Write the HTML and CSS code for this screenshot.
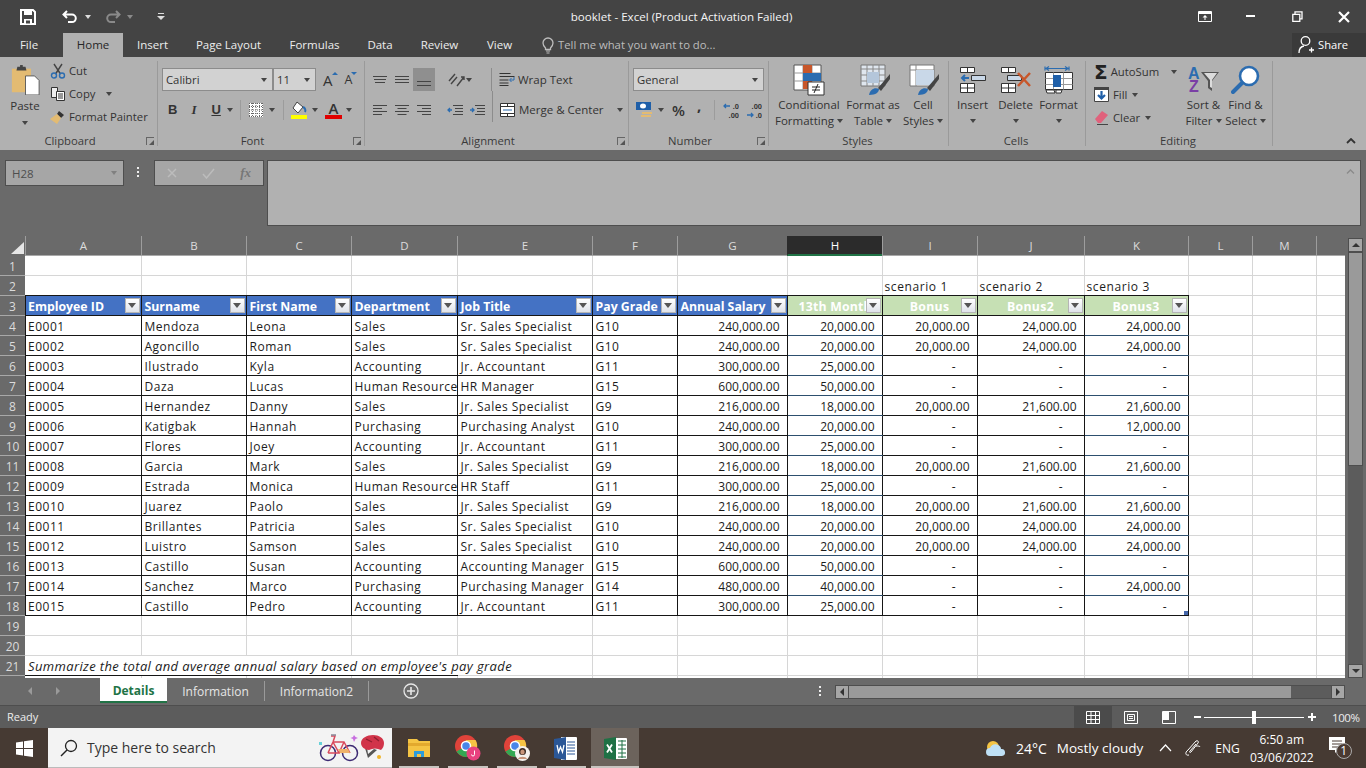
FILE: index.html
```html
<!DOCTYPE html>
<html lang="en">
<head>
<meta charset="utf-8">
<title>booklet - Excel</title>
<link rel="stylesheet" href="styles.css">
</head>
<body>
<div class="app">
<header class="titlebar">
  <div class="qat">
    <svg class="q-save" width="18" height="18" viewBox="0 0 18 18"><path d="M2 2h12l2 2v12H2z" fill="none" stroke="#fff" stroke-width="2"/><path d="M5 2h8v5H5zM5 11h8v5H5z" fill="#fff"/><path d="M7 12.500h4v3H7z" fill="#444"/></svg>
    <svg class="q-undo" width="16" height="14" viewBox="0 0 16 14"><path d="M5 1 1.500 4.500 5 8M2 4.500h8a3.800 3.800 0 0 1 0 7.600H6" fill="none" stroke="#fff" stroke-width="2"/></svg>
    <span class="caret lt q-c1"></span>
    <svg class="q-redo" width="16" height="14" viewBox="0 0 16 14"><path d="M11 1l3.500 3.500L11 8M14 4.500H6a3.800 3.800 0 0 0 0 7.600h4" fill="none" stroke="#8a8a8a" stroke-width="2"/></svg>
    <span class="caret dim q-c2"></span>
    <svg class="q-more" width="8" height="9" viewBox="0 0 8 9"><path d="M1 1h6v1H1z" fill="#ddd"/><path d="M0 4h8L4 8z" fill="#ddd"/></svg>
  </div>
  <div class="doc-title">booklet - Excel (Product Activation Failed)</div>
  <div class="win">
    <svg class="w-a" width="14" height="11" viewBox="0 0 14 11"><path d="M.5.500h13v10H.5z" fill="none" stroke="#fff"/><path d="M1 1h12v2H1z" fill="#fff"/><path d="M7 4 4.500 6.500h2V9h1V6.500h2z" fill="#fff"/></svg>
    <svg class="w-b" width="10" height="3" viewBox="0 0 10 3"><path d="M0 0h9v2H0z" fill="#fff"/></svg>
    <svg class="w-c" width="11" height="11" viewBox="0 0 11 11"><path d="M.8 3.300h7v7h-7zM3 3V.8h7v7H8" fill="none" stroke="#fff" stroke-width="1.300"/></svg>
    <svg class="w-d" width="12" height="12" viewBox="0 0 12 12"><path d="M1 1l10 10M11 1 1 11" stroke="#fff" stroke-width="2.200"/></svg>
  </div>
</header>
<nav class="tabs">
  <span class="tab t-file">File</span>
  <span class="tab active t-home">Home</span>
  <span class="tab t-ins">Insert</span>
  <span class="tab t-pl">Page Layout</span>
  <span class="tab t-for">Formulas</span>
  <span class="tab t-data">Data</span>
  <span class="tab t-rev">Review</span>
  <span class="tab t-view">View</span>
  <svg class="bulb" width="12" height="17" viewBox="0 0 12 17"><path d="M3.500 11C2 9.500 1 8.500 1 6a5 5 0 0 1 10 0c0 2.500-1 3.500-2.500 5v1.500h-5z" fill="none" stroke="#bdbdbd" stroke-width="1.300"/><path d="M4 14h4M4.500 16h3" stroke="#bdbdbd" stroke-width="1.200"/></svg>
  <span class="tell">Tell me what you want to do...</span>
  <span class="share"><svg width="16" height="19" viewBox="0 0 16 19"><circle cx="7.500" cy="6" r="4.300" fill="none" stroke="#fff" stroke-width="1.300"/><path d="M1 18c0-4 2-6.500 5-7M11 15h5M13.500 12.500v5" fill="none" stroke="#fff" stroke-width="1.300"/></svg>Share</span>
</nav>
<section class="ribbon">
  <div class="group g-clip">
    <div class="g-body">
      <div class="big paste">
        <svg width="29" height="30" viewBox="0 0 32 33"><path d="M1 4h21v26H1z" fill="#e3bb72"/><path d="M7 2h9l1 4H6z" fill="#444"/><path d="M10 0h3v3h-3z" fill="#444"/><path d="M16 12h10l5 5v16H16z" fill="#fff" stroke="#555"/></svg>
        <span class="paste-l">Paste</span><span class="caret d"></span>
      </div>
      <div class="stack s-clip">
        <div class="item"><svg width="16" height="16" viewBox="0 0 16 16"><path d="M4 1l6.500 10M12 1 5.500 11" stroke="#444" stroke-width="1.400"/><circle cx="4" cy="12.500" r="2.500" fill="none" stroke="#2b6cb0" stroke-width="1.400"/><circle cx="12" cy="12.500" r="2.500" fill="none" stroke="#2b6cb0" stroke-width="1.400"/></svg><span>Cut</span></div>
        <div class="item"><svg width="16" height="16" viewBox="0 0 16 16"><path d="M1.500 1.500h6v10h-6z" fill="#eee" stroke="#333"/><path d="M6.500 5.500h8v9h-8z" fill="#fff" stroke="#333"/><path d="M8 8h5M8 10h5M8 12h5" stroke="#333"/></svg><span>Copy</span><span class="caret d ml-copy"></span></div>
        <div class="item"><svg width="16" height="16" viewBox="0 0 16 16"><path d="M9 2l5 4-3 3-4-4z" fill="#333"/><path d="M7 5l4 4-4 6-7-5z" fill="#e3bb72"/></svg><span>Format Painter</span></div>
      </div>
    </div>
    <div class="g-label">Clipboard<i class="launch"></i></div>
  </div>
  <div class="group g-font">
    <div class="g-body col">
      <div class="row r-font1">
        <span class="combo c-font">Calibri<span class="caret d"></span></span><span class="combo c-size">11<span class="caret d"></span></span>
        <span class="a-big">A<i class="up"></i></span><span class="a-small">A<i class="dn"></i></span>
      </div>
      <div class="row r-font2">
        <b class="fb">B</b><i class="fi">I</i><u class="fu">U</u><span class="caret d c-u"></span><span class="vsep v-a"></span>
        <svg class="bd" width="14" height="14" viewBox="0 0 14 14"><path d="M0 0h14v14H0z" fill="#fff"/><path d="M0 .5h14M0 3.500h14M0 7h14M0 10.500h14M0 13.500h14M.5 0v14M3.500 0v14M7 0v14M10.500 0v14M13.500 0v14" stroke="#666" stroke-dasharray="1 1"/></svg><span class="caret d c-bd"></span><span class="vsep v-b"></span>
        <svg class="fill" width="17" height="18" viewBox="0 0 17 18"><path d="M6 1l6 5-5 6-5-5z" fill="#fff" stroke="#444"/><path d="M12 6c2 1 3 3 2 5" fill="none" stroke="#2b6cb0" stroke-width="2"/><path d="M0 14h16v4H0z" fill="#ffff00"/></svg><span class="caret d c-fill"></span>
        <span class="fontc">A</span><span class="caret d c-fc"></span>
      </div>
    </div>
    <div class="g-label">Font<i class="launch"></i></div>
  </div>
  <div class="group g-align">
    <div class="g-body col">
      <div class="row r-al1">
        <svg class="al" width="14" height="8" viewBox="0 0 14 8"><path d="M0 .5h14M1 3.500h12M2 6.500h10" stroke="#444"/></svg>
        <svg class="al a2" width="14" height="8" viewBox="0 0 14 8"><path d="M0 .5h14M0 3.500h14M0 6.500h14" stroke="#444"/></svg>
        <span class="al-on"><svg width="14" height="7" viewBox="0 0 14 7"><path d="M0 1.500h14M0 5.500h14" stroke="#444"/></svg></span>
        <svg class="ori" width="17" height="15" viewBox="0 0 17 15"><path d="M1 9l6-7M3 12l6-7M9 14l7-9M13 5h3v3" fill="none" stroke="#444" stroke-width="1.400"/></svg><span class="caret d c-ori"></span><span class="vbar"></span>
        <span class="item wrap"><svg width="16" height="15" viewBox="0 0 16 15"><path d="M.5 1.500h11M.5 4.500h15M.5 8h9M.5 11h9M.5 13.500h9" stroke="#333"/><path d="M15 5v3h-4M12.500 6l-2 2 2 2" fill="none" stroke="#2b6cb0"/></svg>Wrap Text</span>
      </div>
      <div class="row r-al2">
        <svg class="al" width="14" height="10" viewBox="0 0 14 10"><path d="M0 .5h14M0 3.500h9M0 6.500h14M0 9.500h9" stroke="#444"/></svg>
        <svg class="al a2" width="14" height="10" viewBox="0 0 14 10"><path d="M0 .5h14M2.500 3.500h9M0 6.500h14M2.500 9.500h9" stroke="#444"/></svg>
        <svg class="al a3" width="14" height="10" viewBox="0 0 14 10"><path d="M0 .5h14M5 3.500h9M0 6.500h14M5 9.500h9" stroke="#444"/></svg>
        <svg class="ind" width="16" height="10" viewBox="0 0 16 10"><path d="M6 .5h10M8 3.500h8M8 6.500h8M6 9.500h10" stroke="#444"/><path d="M5 5H1M3 3 1 5l2 2" fill="none" stroke="#2b6cb0" stroke-width="1.300"/></svg>
        <svg class="ind i2" width="16" height="10" viewBox="0 0 16 10"><path d="M6 .5h10M8 3.500h8M8 6.500h8M6 9.500h10" stroke="#444"/><path d="M1 5h4M3 3l2 2-2 2" fill="none" stroke="#2b6cb0" stroke-width="1.300"/></svg>
        <span class="vbar v2"></span>
        <span class="item merge"><svg width="15" height="14" viewBox="0 0 15 14"><path d="M.5.500h14v13H.5z" fill="#fff" stroke="#333"/><path d="M.5 3.500h14M.5 10.500h14M7.500.5v3M7.500 10.500v3" stroke="#333"/><path d="M3 7h9" stroke="#2b6cb0"/></svg>Merge &amp; Center<span class="caret d c-mg"></span></span>
      </div>
    </div>
    <div class="g-label">Alignment<i class="launch"></i></div>
  </div>
  <div class="group g-num">
    <div class="g-body col">
      <div class="row r-num1"><span class="combo c-gen">General<span class="caret d"></span></span></div>
      <div class="row r-num2">
        <svg class="cur" width="17" height="18" viewBox="0 0 17 18"><path d="M0 1h15v8H0z" fill="#1f5fa8"/><ellipse cx="7" cy="5" rx="3" ry="2.500" fill="#fff"/><path d="M6 11h10v2H6zM5 14h10v2H5z" fill="#e3bb72"/></svg><span class="caret d c-cur"></span>
        <span class="pct">%</span><span class="cma">,</span><span class="vsep s-n"></span>
        <svg class="dec" width="16" height="20" viewBox="0 0 16 20"><path d="M7 6H1M3 4 1 6l2 2" fill="none" stroke="#2b6cb0" stroke-width="1.300"/><text class="dt" x="16" y="9" text-anchor="end">.0</text><text class="dt" x="16" y="18" text-anchor="end">.00</text></svg>
        <svg class="dec d2" width="16" height="20" viewBox="0 0 16 20"><path d="M1 15h6M5 13l2 2-2 2" fill="none" stroke="#2b6cb0" stroke-width="1.300"/><text class="dt" x="16" y="9" text-anchor="end">.00</text><text class="dt" x="16" y="18" text-anchor="end">.0</text></svg>
      </div>
    </div>
    <div class="g-label">Number<i class="launch"></i></div>
  </div>
  <div class="group g-styles">
    <div class="g-body bigs">
      <div class="big b-cf"><svg width="32" height="32" viewBox="0 0 32 32"><path d="M1 1h27v25H1z" fill="#fff" stroke="#555"/><path d="M1 9h27M1 17h27M10 1v25M19 1v25" stroke="#999"/><path d="M10 1h9v8h-9zM10 17h9v8h-9z" fill="#c8572b"/><path d="M10 9h18v8H10z" fill="#2b6cb0"/><path d="M15 18h16v13H15z" fill="#fff" stroke="#333"/><path d="M19 23h8M19 26h8M25 20l-4 9" stroke="#222"/></svg><span>Conditional</span><span>Formatting<i class="caret d inl"></i></span></div>
      <div class="big b-ft"><svg width="32" height="32" viewBox="0 0 32 32"><path d="M1 1h24v21H1z" fill="#dfe6ee" stroke="#777"/><path d="M1 5h24M1 11h24M1 17h24M7 1v21M13 1v21M19 1v21" stroke="#888"/><path d="M7 8h12v11H7z" fill="#b4c6da"/><path d="M30 10 18 24l3 3 9-12z" fill="#444"/><path d="M9 31c1-6 6-8 10-6 0 3-3 6-10 6z" fill="#2b6cb0"/></svg><span>Format as</span><span>Table<i class="caret d inl"></i></span></div>
      <div class="big b-cs"><svg width="32" height="32" viewBox="0 0 32 32"><path d="M1 1h24v21H1z" fill="#fff" stroke="#777"/><path d="M1 6h24M7 1v21" stroke="#888"/><path d="M7 6h18v15H7z" fill="#c9d8e8"/><path d="M30 10 18 24l3 3 9-12z" fill="#444"/><path d="M9 31c1-6 6-8 10-6 0 3-3 6-10 6z" fill="#2b6cb0"/></svg><span>Cell</span><span>Styles<i class="caret d inl"></i></span></div>
    </div>
    <div class="g-label">Styles</div>
  </div>
  <div class="group g-cells">
    <div class="g-body bigs">
      <div class="big b-ins"><svg width="28" height="28" viewBox="0 0 28 28"><path d="M1.500 1.500h14v5h-14zM1.500 17.500h14v9h-14zM1.500 22h14M8.500 1.500v5M8.500 17.500v9" fill="#fff" stroke="#333"/><path d="M12.500 9.500h14v5h-14z" fill="#c9d8e8" stroke="#333"/><path d="M10 12H3M6 9l-3 3 3 3" fill="none" stroke="#2b6cb0" stroke-width="2"/></svg><span>Insert</span><i class="caret d"></i></div>
      <div class="big b-del"><svg width="32" height="28" viewBox="0 0 32 28"><path d="M1.500 1.500h14v5h-14zM1.500 17.500h14v9h-14zM1.500 22h14M8.500 1.500v5M8.500 17.500v9" fill="#fff" stroke="#333"/><path d="M7.500 9.500h14v5h-14z" fill="#c9d8e8" stroke="#333"/><path d="M18 7l12 13M30 7 18 20" stroke="#c8572b" stroke-width="2.500"/></svg><span>Delete</span><i class="caret d"></i></div>
      <div class="big b-fmt"><svg width="30" height="30" viewBox="0 0 30 30"><path d="M1 1.500v4M25 1.500v4M2 3.500h22M5 1.500l-3 2 3 2M21 1.500l3 2-3 2" fill="none" stroke="#2b6cb0" stroke-width="1.200"/><path d="M1.500 7.500h27v17h-27z" fill="#fff" stroke="#333"/><path d="M1.500 13.500h27M1.500 19.500h27M9.500 7.500v17M19.500 7.500v17" stroke="#999"/><path d="M9 10h8v12H9z" fill="#1f5fa8"/><path d="M2 25h8l1 3H3zM12 25h6l-1 3h-5z" fill="#fff" stroke="#333"/></svg><span>Format</span><i class="caret d"></i></div>
    </div>
    <div class="g-label">Cells</div>
  </div>
  <div class="group g-edit">
    <div class="g-body">
      <div class="stack s-edit">
        <div class="item"><span class="sigma">&Sigma;</span><span>AutoSum</span><span class="caret d c-as"></span></div>
        <div class="item"><svg width="15" height="15" viewBox="0 0 15 15"><path d="M.5.500h14v14H.5z" fill="#fff" stroke="#444"/><path d="M0 0h15v3H0z" fill="#444"/><path d="M7.500 4v7M4 8l3.500 3.500L11 8" fill="none" stroke="#1f5fa8" stroke-width="2.200"/></svg><span>Fill</span><span class="caret d c-fl"></span></div>
        <div class="item"><svg width="15" height="15" viewBox="0 0 15 15"><path d="M1 9l7-8 6 4-7 8H4z" fill="#e0627c"/><path d="M3 14.500h11" stroke="#444"/></svg><span>Clear</span><span class="caret d c-fl"></span></div>
      </div>
      <div class="big b-sort"><svg width="32" height="32" viewBox="0 0 32 32"><path d="M13 8h18l-7 9v10l-4-3v-7z" fill="#555"/><path d="M16 9h13l-5 7v8l-2-1v-7z" fill="#dcdcdc"/><text class="az-a" x="0" y="15">A</text><text class="az-z" x="1" y="28">Z</text></svg><span>Sort &amp;</span><span>Filter<i class="caret d inl"></i></span></div>
      <div class="big b-find"><svg width="30" height="30" viewBox="0 0 30 30"><circle cx="18" cy="11" r="9" fill="#fff" stroke="#2b6cb0" stroke-width="2.600"/><path d="M11 18 2 27" stroke="#2b6cb0" stroke-width="4" stroke-linecap="round"/></svg><span>Find &amp;</span><span>Select<i class="caret d inl"></i></span></div>
    </div>
    <div class="g-label">Editing</div>
  </div>
  <div class="ribbon-end"><svg width="10" height="6" viewBox="0 0 10 6"><path d="M1 5l4-4 4 4" fill="none" stroke="#333" stroke-width="1.800"/></svg></div>
</section>
<section class="formula">
  <div class="namebox">H28<span class="caret fb-c"></span></div>
  <div class="dots"><i></i><i></i><i></i></div>
  <div class="fbtns">
    <svg width="10" height="10" viewBox="0 0 10 10"><path d="M1 1l8 8M9 1 1 9" stroke="#bcbcbc" stroke-width="1.500"/></svg>
    <svg width="13" height="11" viewBox="0 0 13 11"><path d="M1 6l3.500 4L12 1" fill="none" stroke="#bcbcbc" stroke-width="1.500"/></svg>
    <span class="fx">fx</span>
  </div>
  <div class="finput"><svg width="9" height="5" viewBox="0 0 9 5"><path d="M1 4.500l3.500-3.500L8 4.500" fill="none" stroke="#8a8a8a" stroke-width="1.300"/></svg></div>
</section>
<section class="sheet">
  <div class="grid-wrap">
    <div class="colhead">
      <span class="corner"><svg width="14" height="14" viewBox="0 0 14 14"><path d="M14 1v12H1z" fill="#e6e6e6"/></svg></span>
      <span class="ch w-a1">A</span><span class="ch w-b1">B</span><span class="ch w-c1">C</span><span class="ch w-d1">D</span><span class="ch w-e1">E</span><span class="ch w-f1">F</span><span class="ch w-g1">G</span><span class="ch w-h1 sel">H</span><span class="ch w-i1">I</span><span class="ch w-j1">J</span><span class="ch w-k1">K</span><span class="ch w-l1">L</span><span class="ch w-m1">M</span><span class="ch w-n1"></span>
    </div>
    <div class="grid-body">
      <div class="rowheads">
        <span>1</span><span>2</span><span>3</span><span>4</span><span>5</span><span>6</span><span>7</span><span>8</span><span>9</span><span>10</span><span>11</span><span>12</span><span>13</span><span>14</span><span>15</span><span>16</span><span>17</span><span>18</span><span>19</span><span>20</span><span>21</span><span></span>
      </div>
      <table class="cells">
        <colgroup><col class="w-a1"><col class="w-b1"><col class="w-c1"><col class="w-d1"><col class="w-e1"><col class="w-f1"><col class="w-g1"><col class="w-h1"><col class="w-i1"><col class="w-j1"><col class="w-k1"><col class="w-l1"><col class="w-m1"><col class="w-n1"></colgroup>
        <tbody>
          <tr><td></td><td></td><td></td><td></td><td></td><td></td><td></td><td></td><td></td><td></td><td></td><td></td><td></td><td></td></tr>
          <tr class="above"><td></td><td></td><td></td><td></td><td></td><td></td><td></td><td></td><td class="sc">scenario 1</td><td class="sc">scenario 2</td><td class="sc">scenario 3</td><td></td><td></td><td></td></tr>
          <tr class="hd"><td class="blue">Employee ID<i class="fbtn"></i></td><td class="blue">Surname<i class="fbtn"></i></td><td class="blue">First Name<i class="fbtn"></i></td><td class="blue">Department<i class="fbtn"></i></td><td class="blue">Job Title<i class="fbtn"></i></td><td class="blue">Pay Grade<i class="fbtn"></i></td><td class="blue">Annual Salary<i class="fbtn"></i></td><td class="green cl">13th Month<i class="fbtn"></i></td><td class="green ctr">Bonus<i class="fbtn"></i></td><td class="green ctr">Bonus2<i class="fbtn"></i></td><td class="green ctr">Bonus3<i class="fbtn"></i></td><td class="n"></td><td class="n"></td><td class="n"></td></tr>
          <tr class="d"><td>E0001</td><td>Mendoza</td><td>Leona</td><td>Sales</td><td>Sr. Sales Specialist</td><td>G10</td><td class="r">240,000.00</td><td class="r">20,000.00</td><td class="r">20,000.00</td><td class="r">24,000.00</td><td class="r">24,000.00</td><td class="n"></td><td class="n"></td><td class="n"></td></tr>
          <tr class="d"><td>E0002</td><td>Agoncillo</td><td>Roman</td><td>Sales</td><td>Sr. Sales Specialist</td><td>G10</td><td class="r">240,000.00</td><td class="r">20,000.00</td><td class="r">20,000.00</td><td class="r">24,000.00</td><td class="r">24,000.00</td><td class="n"></td><td class="n"></td><td class="n"></td></tr>
          <tr class="d"><td>E0003</td><td>Ilustrado</td><td>Kyla</td><td>Accounting</td><td>Jr. Accountant</td><td>G11</td><td class="r">300,000.00</td><td class="r">25,000.00</td><td class="r dash">-</td><td class="r dash">-</td><td class="r dash">-</td><td class="n"></td><td class="n"></td><td class="n"></td></tr>
          <tr class="d"><td>E0004</td><td>Daza</td><td>Lucas</td><td>Human Resource</td><td>HR Manager</td><td>G15</td><td class="r">600,000.00</td><td class="r">50,000.00</td><td class="r dash">-</td><td class="r dash">-</td><td class="r dash">-</td><td class="n"></td><td class="n"></td><td class="n"></td></tr>
          <tr class="d"><td>E0005</td><td>Hernandez</td><td>Danny</td><td>Sales</td><td>Jr. Sales Specialist</td><td>G9</td><td class="r">216,000.00</td><td class="r">18,000.00</td><td class="r">20,000.00</td><td class="r">21,600.00</td><td class="r">21,600.00</td><td class="n"></td><td class="n"></td><td class="n"></td></tr>
          <tr class="d"><td>E0006</td><td>Katigbak</td><td>Hannah</td><td>Purchasing</td><td>Purchasing Analyst</td><td>G10</td><td class="r">240,000.00</td><td class="r">20,000.00</td><td class="r dash">-</td><td class="r dash">-</td><td class="r">12,000.00</td><td class="n"></td><td class="n"></td><td class="n"></td></tr>
          <tr class="d"><td>E0007</td><td>Flores</td><td>Joey</td><td>Accounting</td><td>Jr. Accountant</td><td>G11</td><td class="r">300,000.00</td><td class="r">25,000.00</td><td class="r dash">-</td><td class="r dash">-</td><td class="r dash">-</td><td class="n"></td><td class="n"></td><td class="n"></td></tr>
          <tr class="d"><td>E0008</td><td>Garcia</td><td>Mark</td><td>Sales</td><td>Jr. Sales Specialist</td><td>G9</td><td class="r">216,000.00</td><td class="r">18,000.00</td><td class="r">20,000.00</td><td class="r">21,600.00</td><td class="r">21,600.00</td><td class="n"></td><td class="n"></td><td class="n"></td></tr>
          <tr class="d"><td>E0009</td><td>Estrada</td><td>Monica</td><td>Human Resource</td><td>HR Staff</td><td>G11</td><td class="r">300,000.00</td><td class="r">25,000.00</td><td class="r dash">-</td><td class="r dash">-</td><td class="r dash">-</td><td class="n"></td><td class="n"></td><td class="n"></td></tr>
          <tr class="d"><td>E0010</td><td>Juarez</td><td>Paolo</td><td>Sales</td><td>Jr. Sales Specialist</td><td>G9</td><td class="r">216,000.00</td><td class="r">18,000.00</td><td class="r">20,000.00</td><td class="r">21,600.00</td><td class="r">21,600.00</td><td class="n"></td><td class="n"></td><td class="n"></td></tr>
          <tr class="d"><td>E0011</td><td>Brillantes</td><td>Patricia</td><td>Sales</td><td>Sr. Sales Specialist</td><td>G10</td><td class="r">240,000.00</td><td class="r">20,000.00</td><td class="r">20,000.00</td><td class="r">24,000.00</td><td class="r">24,000.00</td><td class="n"></td><td class="n"></td><td class="n"></td></tr>
          <tr class="d"><td>E0012</td><td>Luistro</td><td>Samson</td><td>Sales</td><td>Sr. Sales Specialist</td><td>G10</td><td class="r">240,000.00</td><td class="r">20,000.00</td><td class="r">20,000.00</td><td class="r">24,000.00</td><td class="r">24,000.00</td><td class="n"></td><td class="n"></td><td class="n"></td></tr>
          <tr class="d"><td>E0013</td><td>Castillo</td><td>Susan</td><td>Accounting</td><td>Accounting Manager</td><td>G15</td><td class="r">600,000.00</td><td class="r">50,000.00</td><td class="r dash">-</td><td class="r dash">-</td><td class="r dash">-</td><td class="n"></td><td class="n"></td><td class="n"></td></tr>
          <tr class="d"><td>E0014</td><td>Sanchez</td><td>Marco</td><td>Purchasing</td><td>Purchasing Manager</td><td>G14</td><td class="r">480,000.00</td><td class="r">40,000.00</td><td class="r dash">-</td><td class="r dash">-</td><td class="r">24,000.00</td><td class="n"></td><td class="n"></td><td class="n"></td></tr>
          <tr class="d last"><td>E0015</td><td>Castillo</td><td>Pedro</td><td>Accounting</td><td>Jr. Accountant</td><td>G11</td><td class="r">300,000.00</td><td class="r">25,000.00</td><td class="r dash">-</td><td class="r dash">-</td><td class="r dash handle">-</td><td class="n"></td><td class="n"></td><td class="n"></td></tr>
          <tr><td></td><td></td><td></td><td></td><td></td><td></td><td></td><td></td><td></td><td></td><td></td><td></td><td></td><td></td></tr>
          <tr><td></td><td></td><td></td><td></td><td></td><td></td><td></td><td></td><td></td><td></td><td></td><td></td><td></td><td></td></tr>
          <tr class="note"><td class="it">Summarize the total and average annual salary based on employee's pay grade</td><td></td><td></td><td></td><td></td><td></td><td></td><td></td><td></td><td></td><td></td><td></td><td></td><td></td></tr>
          <tr class="edge"><td></td><td></td><td></td><td></td><td></td><td></td><td></td><td></td><td></td><td></td><td></td><td></td><td></td><td></td></tr>
        </tbody>
      </table>
    </div>
  </div>
  <div class="vscroll">
    <span class="sbtn"><i class="tri up"></i></span>
    <div class="vtrack"><span class="thumb"></span></div>
    <span class="sbtn"><i class="tri down"></i></span>
  </div>
</section>
<section class="sheetbar">
  <span class="nav-l"></span><span class="nav-r"></span>
  <span class="st active-st">Details</span><span class="st s1">Information</span><span class="st s2">Information2</span>
  <svg class="plus" width="16" height="16" viewBox="0 0 16 16"><circle cx="8" cy="8" r="7" fill="none" stroke="#e6e6e6" stroke-width="1.300"/><path d="M8 4v8M4 8h8" stroke="#e6e6e6" stroke-width="1.600"/></svg>
  <div class="dots dots-h"><i></i><i></i><i></i></div>
  <div class="hscroll">
    <span class="hbtn"><i class="tri left"></i></span><span class="hthumb"></span><span class="hspace"></span><span class="hbtn"><i class="tri right"></i></span>
  </div>
</section>
<footer class="status">
  <span class="ready">Ready</span>
  <span class="view on"><svg width="14" height="13" viewBox="0 0 14 13"><path d="M.5.500h13v12H.5zM.5 4.500h13M.5 8.500h13M5 .5v12M9.500.5v12" fill="none" stroke="#fff"/></svg></span>
  <span class="view"><svg width="14" height="13" viewBox="0 0 14 13"><path d="M.5.500h13v12H.5z" fill="none" stroke="#fff"/><path d="M3.500 3.500h7v6h-7zM5 5.500h4M5 7.500h4" fill="none" stroke="#fff"/></svg></span>
  <span class="view"><svg width="14" height="13" viewBox="0 0 14 13"><path d="M.5.500h13v12H.5z" fill="none" stroke="#fff"/><path d="M1 1h6v8H1z" fill="#fff"/></svg></span>
  <span class="zoom-m"></span>
  <span class="slider"><i></i></span>
  <span class="zoom-p"></span>
  <span class="zoomv">100%</span>
</footer>
<footer class="taskbar">
  <span class="start"><svg width="17" height="17" viewBox="0 0 17 17"><path d="M0 2.500 7 1.500v6.500H0zM8 1.300 17 0v8H8zM0 9h7v6.500L0 14.500zM8 9h9v8L8 15.700z" fill="#fff"/></svg></span>
  <div class="search">
    <svg width="18" height="18" viewBox="0 0 18 18"><circle cx="11" cy="7" r="5.500" fill="none" stroke="#222" stroke-width="1.300"/><path d="M7 11l-6 6" stroke="#222" stroke-width="1.500"/></svg>
    <span class="s-text">Type here to search</span>
    <svg class="bike" width="68" height="30" viewBox="0 0 68 30"><circle cx="9" cy="20" r="7.500" fill="none" stroke="#3d2a73" stroke-width="1.500"/><circle cx="31" cy="20" r="7.500" fill="none" stroke="#3d2a73" stroke-width="1.500"/><path d="M9 20 14 9h11l6 11M14 9l6 11H9M25 9l-5 11M12 3h4l-2 6" fill="none" stroke="#d94a5c" stroke-width="1.500"/><path d="M12 2h5" stroke="#8a8a9a" stroke-width="1.500"/><path d="M19 16h10l2 4H21z" fill="#efb26b"/><path d="M0 9h3v3H0z" fill="#66d0d8"/><path d="M35 2l1.500 2 2.500 1-2.500 1-1.500 3-1-3-2.500-1 2.500-1z" fill="#c86ee0"/><path d="M46 15l3 10 9-8-3-1-6 5-1-7z" fill="#555"/><path d="M42 10c0-5 6-8 12-8 6 0 11 3 11 8 0 3-1 5-3 7-4-2-8-2-12 0-4 0-8-3-8-7z" fill="#d1344a"/><path d="M47 6l6 3M55 4l5 4" stroke="#8f2030" stroke-width="1.300"/><circle cx="60" cy="24" r="2" fill="#f0b429"/></svg>
  </div>
  <span class="tb tb-first"><svg width="22" height="18" viewBox="0 0 22 18"><path d="M0 0h9l2 2h11v16H0z" fill="#f5c444"/><path d="M0 4h22v3H0z" fill="#e3a92e"/><path d="M6 12h10v6h-3v-3H9v3H6z" fill="#2d9cdb"/></svg></span>
  <span class="tb"><svg width="26" height="26" viewBox="0 0 26 26"><circle cx="11" cy="11" r="11" fill="#e0433a"/><path d="M11 11 1.500 16.500A11 11 0 0 0 15 21.200z" fill="#34a853"/><path d="M11 5h9.500A11 11 0 0 1 15 21.200z" fill="#f5c444"/><circle cx="11" cy="11" r="4.500" fill="#4a86e8" stroke="#fff" stroke-width="1.500"/><circle cx="18.500" cy="18.500" r="7" fill="#e8437f"/><path d="M19.500 15.500v4a1.500 1.500 0 0 1-3 0" fill="none" stroke="#fff"/></svg></span>
  <span class="tb"><svg width="26" height="26" viewBox="0 0 26 26"><circle cx="11" cy="11" r="11" fill="#e0433a"/><path d="M11 11 1.500 16.500A11 11 0 0 0 15 21.200z" fill="#34a853"/><path d="M11 5h9.500A11 11 0 0 1 15 21.200z" fill="#f5c444"/><circle cx="11" cy="11" r="4.500" fill="#4a86e8" stroke="#fff" stroke-width="1.500"/><circle cx="18.500" cy="18.500" r="7.500" fill="#f4f1ee"/><circle cx="18.500" cy="16.500" r="3.500" fill="#3a2a22"/><path d="M18.500 14.500a2.200 2.500 0 0 1 0 5 2.200 2.500 0 0 1 0-5M14 24c1-3 8-3 9 0z" fill="#c8957a"/></svg></span>
  <span class="tb"><svg width="23" height="23" viewBox="0 0 23 23"><path d="M7 0h15a1 1 0 0 1 1 1v21a1 1 0 0 1-1 1H7z" fill="#fff"/><path d="M13 5h8M13 8h8M13 11h8M13 14h8M13 17h8" stroke="#2b5797"/><path d="M12 0 0 2v19l12 2z" fill="#2b5797"/><path d="M3 8l1.500 7 2-5 2 5L10 8" fill="none" stroke="#fff" stroke-width="1.300"/></svg></span>
  <span class="tb tb-on"><svg width="23" height="23" viewBox="0 0 23 23"><path d="M7 1h15a1 1 0 0 1 1 1v19a1 1 0 0 1-1 1H7z" fill="#fff"/><path d="M14 4h8M14 8h8M14 12h8M14 16h8M14 20h8M18 3v18" stroke="#1f7145"/><path d="M12 0 0 2v19l12 2z" fill="#1f7145"/><path d="M3 7.500l5 8M8 7.500l-5 8" stroke="#fff" stroke-width="1.800"/></svg></span>
  <div class="tray">
    <svg class="cloud" width="22" height="17" viewBox="0 0 22 17"><circle cx="8" cy="7" r="6" fill="#f5c444"/><path d="M5 16a4 4 0 0 1 0-8c1-3 5-5 8-3 2 1 3 2 3 4a3.500 3.500 0 0 1 1 7z" fill="#bfe0f5"/></svg>
    <span class="temp">24°C</span><span class="cond">Mostly cloudy</span>
    <svg class="chev" width="13" height="8" viewBox="0 0 13 8"><path d="M1 7l5.500-6L12 7" fill="none" stroke="#fff" stroke-width="1.200"/></svg>
    <svg class="pen" width="18" height="18" viewBox="0 0 18 18"><path d="M5 16c-4 1-4-3-1-5l8-9c2-1 3 1 2 2l-7 9c-1 1-2 0-1-1l6-7M12 7c2 0 4 0 4 1" fill="none" stroke="#fff" stroke-width="1"/></svg>
    <span class="lang">ENG</span>
    <span class="clock"><span>6:50 am</span><span>03/06/2022</span></span>
    <span class="notif"><svg width="24" height="24" viewBox="0 0 24 24"><path d="M0 1h16v13H9l-3 3v-3H0z" fill="#fff"/><path d="M3 5h10M3 8h10M3 11h6" stroke="#4a3a32"/><circle cx="15" cy="15" r="7.500" fill="#4a3a32" stroke="#aaa"/></svg><b>1</b></span>
  </div>
</footer>
</div>
</body>
</html>
```
FILE: styles.css
```css
*{box-sizing:border-box}
html,body{margin:0;padding:0;height:100%;overflow:hidden}
body{font-family:"Open Sans","Noto Sans",sans-serif;font-size:12px;color:#262626;background:#6a6a6a}
.app{width:1366px;height:768px;display:flex;flex-direction:column;overflow:hidden}
svg{display:block;flex:none}
.caret{display:inline-block;width:0;height:0;border-left:3.500px solid transparent;border-right:3.500px solid transparent;border-top:4px solid #444;flex:none}
.caret.lt{border-top-color:#ddd}.caret.dim{border-top-color:#8a8a8a}
.caret.inl{margin-left:3px;vertical-align:2px}

.titlebar{height:33px;background:#444;display:flex;align-items:center;color:#fff;flex:none}
.qat{width:380px;display:flex;align-items:center;padding-left:19px}
.q-undo{margin-left:25px}.q-c1{margin-left:7px}.q-redo{margin-left:14px}.q-c2{margin-left:6px}.q-more{margin-left:24px}
.doc-title{width:603px;text-align:center;font-size:11.600px;color:#f4f4f4;white-space:nowrap}
.win{flex:1;display:flex;align-items:center;padding-left:215px}
.w-b{margin-left:34px}.w-c{margin-left:36px}.w-d{margin-left:35px}

.tabs{height:24px;background:#444;display:flex;align-items:flex-end;color:#ededed;flex:none;font-size:11.500px}
.tab{height:24px;display:flex;align-items:center;justify-content:center;white-space:nowrap;padding-bottom:2px}
.tab.active{background:#b1b1b1;color:#262626}
.t-file{width:63px;padding-right:5px}.t-home{width:60px}.t-ins{width:59px}.t-pl{width:93px}.t-for{width:79px}.t-data{width:52px}.t-rev{width:67px}.t-view{width:53px}
.bulb{margin:0 4px 0 16px;align-self:center}
.tell{color:#bdbdbd;align-self:center;font-size:11.300px;white-space:nowrap;padding-bottom:2px}
.share{margin-left:auto;width:74px;height:24px;background:#3a3a3a;display:flex;align-items:center;gap:4px;padding:0 0 2px 6px;color:#fff;font-size:11.200px}

.ribbon{height:93px;background:#b1b1b1;display:flex;flex:none;color:#333;font-size:11.500px}
.group{display:flex;flex-direction:column;border-right:1px solid #9a9a9a;margin-top:4px;height:85px;flex:none}
.g-clip{width:158px}.g-font{width:207px}.g-align{width:264px}.g-num{width:140px}.g-styles{width:180px}.g-cells{width:137px}.g-edit{width:187px}
.g-body{flex:1;display:flex;min-height:0}
.g-body.col{flex-direction:column}
.g-label{height:10px;text-align:center;position:relative;font-size:11.300px;line-height:10px;padding-right:2px;color:#3a3a3a;flex:none}
.g-clip .g-label,.g-font .g-label,.g-align .g-label,.g-num .g-label{padding-right:17px}
.launch{position:absolute;right:3px;top:1px;width:8px;height:8px;border:1px solid #666;border-width:1px 0 0 1px}
.launch::after{content:"";position:absolute;right:0;bottom:0;width:5px;height:5px;background:#555;clip-path:polygon(100% 0,100% 100%,0 100%)}
.row{display:flex;align-items:center}
.big{display:flex;flex-direction:column;align-items:center;line-height:16px;white-space:nowrap;flex:none}
.paste{width:50px;padding-top:4px}
.paste .caret{margin-top:7px}
.stack{display:flex;flex-direction:column}
.s-clip{margin-top:-2px;font-size:11.300px}
.item{display:flex;align-items:center;gap:3px;height:23px;white-space:nowrap}
.ml-copy{margin-left:8px}

.combo{display:flex;align-items:center;justify-content:space-between;height:23px;background:#d2d2d2;border:1px solid #8c8c8c;padding:0 5px 0 3px;font-size:11.300px;color:#333}
.r-font1{padding:7px 0 0 4px}
.c-font{width:111px}.c-size{width:43px}
.a-big,.a-small{position:relative;font-size:15px;color:#333;line-height:20px}
.a-big{margin-left:7px}.a-small{margin-left:12px;font-size:12.500px}
.a-big i,.a-small i{position:absolute;top:2px;right:-5px;width:0;height:0;border-left:3px solid transparent;border-right:3px solid transparent}
.a-big i{border-bottom:3px solid #2b6cb0}.a-small i{border-top:3px solid #2b6cb0}
.r-font2{padding:3px 0 0 10px;height:34px}
.fb,.fi,.fu{font-size:13px;font-family:"Liberation Sans",sans-serif;color:#333}
.fb{font-weight:700}
.fi{margin-left:14px;font-weight:700;font-family:"Liberation Serif",serif}
.fu{margin-left:15px;font-weight:700}
.c-u{margin-left:6px}
.vsep{width:1px;height:20px;background:#9c9c9c}
.v-a{margin-left:7px}.v-b{margin-left:8px}
.bd{margin-left:8px}.c-bd{margin-left:6px}
.fill{margin-left:7px}.c-fill{margin-left:4px}
.fontc{margin-left:7px;font-size:15px;line-height:14px;font-weight:600;border-bottom:4px solid #e00000;width:17px;text-align:center;color:#333}
.c-fc{margin-left:4px}

.r-al1{padding:7px 0 0 8px;height:30px}
.al-on{width:22px;height:23px;background:#8f8f8f;display:flex;align-items:center;justify-content:center;margin-left:4px;padding-top:7px}
.al.a2,.al.a3{margin-left:8px}
.ori{margin-left:13px}.c-ori{margin-left:1px}
.vbar{width:1px;align-self:stretch;background:#8c8c8c;margin-left:19px}
.wrap{margin-left:7px;gap:3px;height:20px}
.r-al2{padding:3px 0 0 8px;height:34px}
.ind{margin-left:16px}.ind.i2{margin-left:6px}
.vbar.v2{margin:-3px 0 0 7px;align-self:flex-start;height:31px}
.merge{margin-left:7px;gap:4px}
.c-mg{margin-left:9px}

.r-num1{padding:7px 0 0 4px}
.c-gen{width:131px}
.r-num2{padding:3px 0 0 7px;height:34px}
.c-cur{margin-left:5px}
.pct{font-size:15px;margin-left:8px;font-weight:600;color:#333}
.cma{font-size:15px;font-weight:700;margin-left:12px;line-height:12px;padding-bottom:10px}
.s-n{margin-left:13px}
.dec{margin-left:8px}
.dec.d2{margin-left:7px}
.dt{font-family:"Liberation Sans",sans-serif;font-size:7.500px;font-weight:700;fill:#333}

.bigs{padding-top:3px}
.b-cf{width:68px;margin-left:6px}.b-ft{width:58px;margin-left:1px}.b-cs{width:40px;margin-left:1px}
.b-ft svg{margin-left:6px}.b-cs svg{margin-left:3px}
.big svg{margin-bottom:1px}
.paste svg{margin-bottom:3px}
.big>span{height:16px}
.g-styles .big svg,.g-cells .big svg,.b-sort svg,.b-find svg{height:32px}
.g-cells .big{width:43px}
.b-ins{margin-left:2px}
.big>i.caret{margin-top:6px}
.s-edit{margin-top:-1px;padding-left:8px;width:95px;font-size:11.300px}
.sigma{font-size:20px;line-height:20px;font-weight:700;color:#222;font-family:"DejaVu Sans",sans-serif;margin-right:-1px}
.s-edit .item{gap:4px}
.c-as{margin-left:8px}.c-fl{margin-left:1px}
.b-sort{width:41px;margin-left:2px;padding-top:3px}
.az-a,.az-z{font-family:"Liberation Sans",sans-serif;font-size:16px;font-weight:700}
.az-a{fill:#2b6cb0}.az-z{fill:#7a3fa5}
.b-find{width:41px;margin-left:1px;padding-top:3px}
.ribbon-end{flex:1;display:flex;align-items:flex-end;justify-content:flex-end;padding:0 10px 6px 0}

.formula{height:86px;background:#6a6a6a;display:flex;padding-top:10px;flex:none;align-items:flex-start}
.namebox{margin-left:5px;width:119px;height:26px;background:#a6a6a6;border:1px solid #4e4e4e;display:flex;align-items:center;justify-content:space-between;padding:0 6px;font-size:11.500px;color:#4e4e4e}
.fb-c{border-top-color:#808080}
.dots{display:flex;flex-direction:column;gap:2px;width:10px;margin:7px 0 0 13px}
.dots i{width:2px;height:2px;background:#eee;display:block}
.fbtns{margin-left:7px;width:110px;height:26px;background:#a6a6a6;border:1px solid #4e4e4e;display:flex;align-items:center;justify-content:space-between;padding:0 12px}
.fx{font-family:"Liberation Serif",serif;font-style:italic;font-weight:700;font-size:13px;color:#777}
.finput{margin-left:3px;width:1094px;height:66px;background:#b1b1b1;border:1px solid #4e4e4e;display:flex;justify-content:flex-end;padding:8px 5px 0 0}

.sheet{height:442px;display:flex;flex:none;background:#6a6a6a}
.grid-wrap{width:1345px;overflow:hidden;display:flex;flex-direction:column}
.colhead{height:20px;display:flex;flex:none}
.corner{width:25px;display:flex;align-items:flex-end;justify-content:flex-end;padding:0 1px 1px 0}
.ch{display:flex;align-items:center;justify-content:center;border-left:1px solid #9d9d9d;font-size:11.500px;color:#dcdcdc;flex:none;height:20px;border-bottom:1px solid #a8a8a8}
.ch.sel{background:#2b2b2b;border-bottom:2px solid #217346;color:#fff;border-left-color:#2b2b2b}
.w-a1{width:116px}.w-b1{width:105px}.w-c1{width:105px}.w-d1{width:106px}.w-e1{width:135px}.w-f1{width:85px}.w-g1{width:110px}.w-h1{width:95px}.w-i1{width:95px}.w-j1{width:107px}.w-k1{width:104px}.w-l1{width:64px}.w-m1{width:64px}.w-n1{width:29px}
.grid-body{display:flex;flex:1;min-height:0;overflow:hidden;background:#fff}
.rowheads{width:25px;flex:none;background:#6a6a6a;display:flex;flex-direction:column}
.rowheads span{height:20px;flex:none;border-bottom:1px solid #a8a8a8;color:#dcdcdc;font-size:12px;text-align:center;line-height:21px}
.cells{border-collapse:collapse;table-layout:fixed;width:1320px;font-size:12px;color:#1c1c1c;flex:none;align-self:flex-start;margin-top:-1px}
.cells td{height:20px;padding:2px 2px 0 3px;border:1px solid #d6d6d6;white-space:nowrap;overflow:hidden;line-height:17px;position:relative}
.cells td:first-child{border-left:0}
.cells .hd td:not(.n),.cells .d td:not(.n){border-color:#161616}
.cells .hd td.n,.cells .d td.n{border-left-color:#161616}
.cells .hd td:first-child,.cells .d td:first-child{box-shadow:inset 1px 0 #161616}
.cells .above td:nth-child(-n+11){border-bottom-color:#161616}
.cells .d td:nth-child(8),.cells .d td:nth-child(11){border-bottom-color:#2d4f6e}
.cells .d.last td:not(.n){border-bottom-color:#161616}
.cells .d td:not(.r){letter-spacing:.5px}
.cells td.sc{letter-spacing:.6px;padding-left:2px}
.cells .hd td{font-weight:700;padding-right:18px}
.cells td.blue{background:#4472c4;color:#fff;font-size:12.300px}
.cells td.green{background:#c6e0b4;color:#fff;font-size:12.300px}
.cells .hd td.ctr{text-align:center;padding:2px 0 0;letter-spacing:.3px}
.cells .hd td.cl{padding-left:11px;padding-right:0;text-align:left;letter-spacing:.2px}
.cells .d td.r{text-align:right;padding-right:7px}
.cells .d td.dash{padding-right:21px}
.cells .d td.handle::after{content:"";position:absolute;right:0;bottom:0;width:4px;height:4px;background:#4466aa}
.cells td.it{font-style:italic;overflow:visible;font-size:13px;letter-spacing:.37px}
.cells .note td:nth-child(-n+4){border-right-color:transparent;border-bottom-color:#161616}
.cells .note td:nth-child(5){border-left-color:transparent}
.fbtn{position:absolute;right:1px;top:2px;width:15px;height:15px;background:linear-gradient(#fff,#dfe3ea);border:1px solid #b5b5b5;display:flex;align-items:center;justify-content:center}
.fbtn::after{content:"";width:0;height:0;border-left:4px solid transparent;border-right:4px solid transparent;border-top:5px solid #555}

.vscroll{width:21px;background:#6a6a6a;display:flex;flex-direction:column;align-items:flex-start;padding:2px 0 0 3px;height:442px}
.sbtn{width:15px;height:14px;background:#a6a6a6;border:1px solid #4e4e4e;display:flex;align-items:center;justify-content:center;flex:none}
.vtrack{width:15px;flex:1;background:#5c5c5c;min-height:0}
.thumb{display:block;width:15px;height:214px;background:#9a9a9a;border:1px solid #4e4e4e}
.tri{display:block;width:0;height:0}
.tri.up{border-left:4px solid transparent;border-right:4px solid transparent;border-bottom:4px solid #333}
.tri.down{border-left:4px solid transparent;border-right:4px solid transparent;border-top:4px solid #333}
.tri.left{border-top:4px solid transparent;border-bottom:4px solid transparent;border-right:4px solid #333}
.tri.right{border-top:4px solid transparent;border-bottom:4px solid transparent;border-left:4px solid #333}

.sheetbar{height:28px;background:#6a6a6a;display:flex;align-items:flex-start;flex:none;border-bottom:1px solid #4e4e4e}
.nav-l,.nav-r{width:0;height:0;border-top:4px solid transparent;border-bottom:4px solid transparent;margin-top:9px}
.nav-l{margin-left:28px;border-right:4px solid #9a9a9a}
.nav-r{margin-left:24px;border-left:4px solid #9a9a9a}
.st{display:flex;align-items:center;justify-content:center;color:#e6e6e6;font-size:12px;border-right:1px solid #9a9a9a}
.st.active-st{background:#fff;color:#217346;font-weight:700;width:67px;margin-left:40px;border-right:0;border-bottom:2px solid #217346;height:25px;padding-top:2px}
.st.s1{width:98px;height:20px;margin-top:3px}
.st.s2{width:104px;height:20px;margin-top:3px}
.plus{margin:5px 0 0 34px}
.dots-h{margin:8px 0 0 400px;width:3px}
.hscroll{margin:7px 21px 0 13px;flex:1;display:flex;height:14px}
.hbtn{width:14px;height:14px;background:#a6a6a6;border:1px solid #4e4e4e;display:flex;align-items:center;justify-content:center;flex:none}
.hthumb{width:442px;background:#9a9a9a;border:1px solid #4e4e4e;border-width:1px 0}
.hspace{flex:1;background:#5c5c5c;border:1px solid #4e4e4e;border-width:1px 0}

.status{height:22px;background:#5c5c5c;display:flex;align-items:center;color:#ededed;font-size:11px;flex:none}
.ready{margin-left:7px;width:1067px;padding-bottom:2px}
.view{width:38px;height:22px;display:flex;align-items:center;justify-content:center}
.view.on{background:#4b4b4b}
.zoom-m{width:7px;height:2px;background:#fff;margin:0 0 0 6px}
.slider{width:100px;height:1px;background:#fff;margin-left:3px;position:relative}
.slider i{position:absolute;left:48px;top:-6px;width:4px;height:13px;background:#fff}
.zoom-p{width:8px;height:8px;margin-left:4px;background:linear-gradient(#fff,#fff) center/8px 2px no-repeat,linear-gradient(#fff,#fff) center/2px 8px no-repeat}
.zoomv{margin-left:16px;font-size:11.500px;letter-spacing:-.4px}

.taskbar{height:40px;background:#463a33;display:flex;align-items:center;flex:none;color:#fff}
.start{width:48px;height:40px;display:flex;align-items:center;justify-content:center;background:#463a33}
.search{width:344px;height:40px;background:#f3f3f3;display:flex;align-items:center;padding-left:12px;color:#333;font-size:14px;border-bottom:1px solid #bbb}
.s-text{margin-left:9px;width:232px}
.bike{margin-left:0}
.tb{width:49px;height:40px;display:flex;align-items:center;justify-content:center;position:relative;flex:none}
.tb::after{content:"";position:absolute;left:5px;right:4px;bottom:0;height:2px;background:#c8c4c0}
.tb-first{margin-left:2px}
.tb-on{background:#6c635c;width:48px;margin-left:1px}
.tb-on::after{left:0;right:0}
.tray{flex:1;display:flex;align-items:center;font-size:14px;padding-left:346px}
.temp{margin-left:9px}.cond{margin-left:10px;font-size:13.500px}
.chev{margin-left:16px}
.pen{margin-left:12px}
.lang{margin-left:13px;font-size:12px}
.clock{display:flex;flex-direction:column;align-items:center;margin:1px 0 0 13px;font-size:12px;line-height:18px;width:58px;white-space:nowrap}
.notif{position:relative;margin-left:18px;width:24px;height:24px}
.notif b{position:absolute;left:11px;top:6px;font-size:12px;font-weight:400;width:8px;text-align:center}
```
